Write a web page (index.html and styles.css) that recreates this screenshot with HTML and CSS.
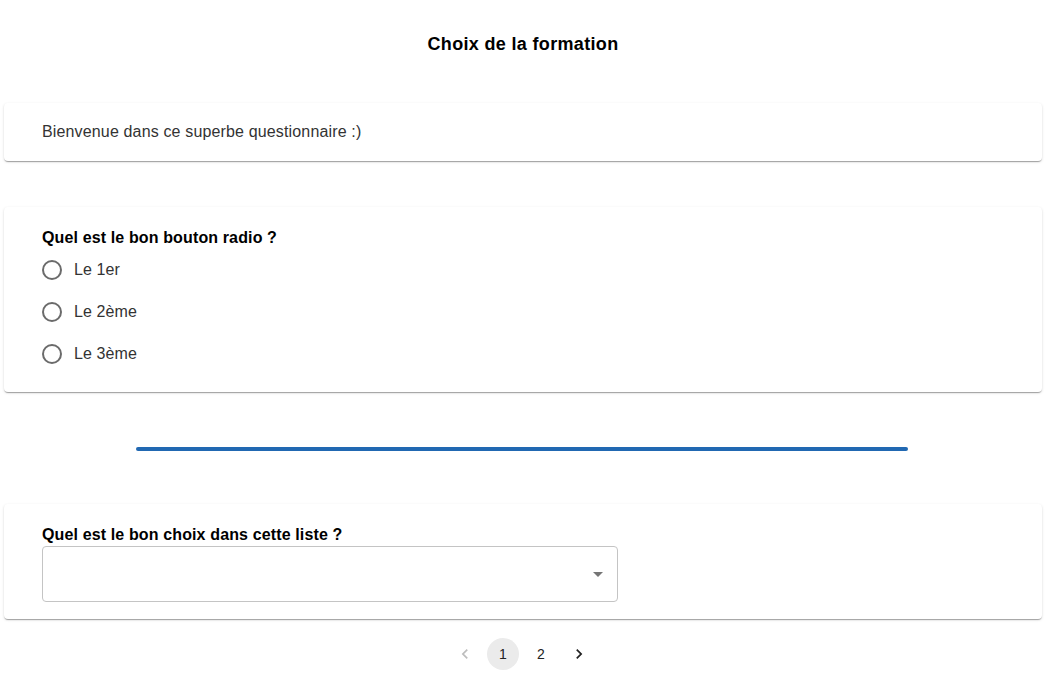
FILE: index.html
```html
<!DOCTYPE html>
<html lang="fr">
<head>
<meta charset="utf-8">
<title>Choix de la formation</title>
<link rel="stylesheet" href="styles.css">
</head>
<body>
<div class="page">
  <h1 class="title">Choix de la formation</h1>

  <section class="card card-intro">
    <p class="intro">Bienvenue dans ce superbe questionnaire :)</p>
  </section>

  <section class="card card-radio">
    <h2 class="question">Quel est le bon bouton radio ?</h2>
    <div class="radio-group">
      <label class="radio-row"><span class="radio"></span><span class="radio-label">Le 1er</span></label>
      <label class="radio-row"><span class="radio"></span><span class="radio-label">Le 2ème</span></label>
      <label class="radio-row"><span class="radio"></span><span class="radio-label">Le 3ème</span></label>
    </div>
  </section>

  <div class="progress"></div>

  <section class="card card-select">
    <h2 class="question">Quel est le bon choix dans cette liste ?</h2>
    <div class="select">
      <svg class="select-arrow" viewBox="0 0 24 24" width="24" height="24"><path d="M7 10l5 5 5-5z"/></svg>
    </div>
  </section>

  <nav class="pagination">
    <span class="page-btn disabled">
      <svg viewBox="0 0 24 24" width="20" height="20"><path d="M15.41 7.41 14 6l-6 6 6 6 1.41-1.41L10.83 12z"/></svg>
    </span>
    <span class="page-btn selected">1</span>
    <span class="page-btn">2</span>
    <span class="page-btn">
      <svg viewBox="0 0 24 24" width="20" height="20"><path d="M10 6 8.59 7.41 13.17 12l-4.58 4.59L10 18l6-6z"/></svg>
    </span>
  </nav>
</div>
</body>
</html>
```

FILE: styles.css
```css
html, body {
  margin: 0;
  padding: 0;
  background: #ffffff;
}

body {
  font-family: "Liberation Sans", Arial, sans-serif;
  color: #222222;
}

.page {
  display: flex;
  flex-direction: column;
  padding: 0 8px 0 4px;
}

.title {
  margin: 0;
  padding-top: 34px;
  font-size: 18px;
  line-height: 20px;
  font-weight: bold;
  letter-spacing: 0.33px;
  text-align: center;
  color: #000000;
}

.card {
  background: #ffffff;
  border-radius: 4px;
  box-shadow: 0px 2px 1px -1px rgba(0,0,0,0.2), 0px 1px 1px 0px rgba(0,0,0,0.14), 0px 1px 3px 0px rgba(0,0,0,0.12);
  padding-left: 38px;
  padding-right: 24px;
}

.card-intro {
  margin-top: 49px;
  padding-top: 19px;
  padding-bottom: 19px;
}

.intro {
  margin: 0;
  font-size: 16px;
  line-height: 20px;
  letter-spacing: 0.15px;
  color: #333333;
}

.card-radio {
  margin-top: 46px;
  padding-top: 21px;
  padding-bottom: 17px;
}

.question {
  margin: 0;
  font-size: 16px;
  line-height: 20px;
  font-weight: bold;
  letter-spacing: 0.13px;
  color: #000000;
}

.radio-group {
  display: flex;
  flex-direction: column;
  margin-top: 1px;
}

.radio-row {
  display: flex;
  align-items: center;
  height: 42px;
}

.radio {
  width: 20px;
  height: 20px;
  box-sizing: border-box;
  border: 2px solid #6b6b6b;
  border-radius: 50%;
}

.radio-label {
  margin-left: 12px;
  font-size: 16px;
  letter-spacing: 0.1px;
  color: #333333;
}

.progress {
  margin: 55px 0 0 132px;
  width: 772px;
  height: 4px;
  border-radius: 2px;
  background: #2168b2;
}

.card-select {
  margin-top: 53px;
  padding-top: 21px;
  padding-bottom: 17px;
}

.select {
  margin-top: 1px;
  width: 576px;
  height: 56px;
  box-sizing: border-box;
  border: 1px solid #c4c4c4;
  border-radius: 4px;
  display: flex;
  align-items: center;
  justify-content: flex-end;
  padding-right: 7px;
}

.select-arrow {
  fill: #757575;
}

.pagination {
  display: flex;
  justify-content: center;
  gap: 6px;
  margin-top: 19px;
  padding-right: 2px;
}

.page-btn {
  width: 32px;
  height: 32px;
  border-radius: 16px;
  display: flex;
  align-items: center;
  justify-content: center;
  font-size: 14px;
  color: #222222;
}

.page-btn svg {
  fill: #222222;
}

.page-btn.disabled svg {
  fill: #bdbdbd;
}

.page-btn.selected {
  background: #ebebeb;
}
```
